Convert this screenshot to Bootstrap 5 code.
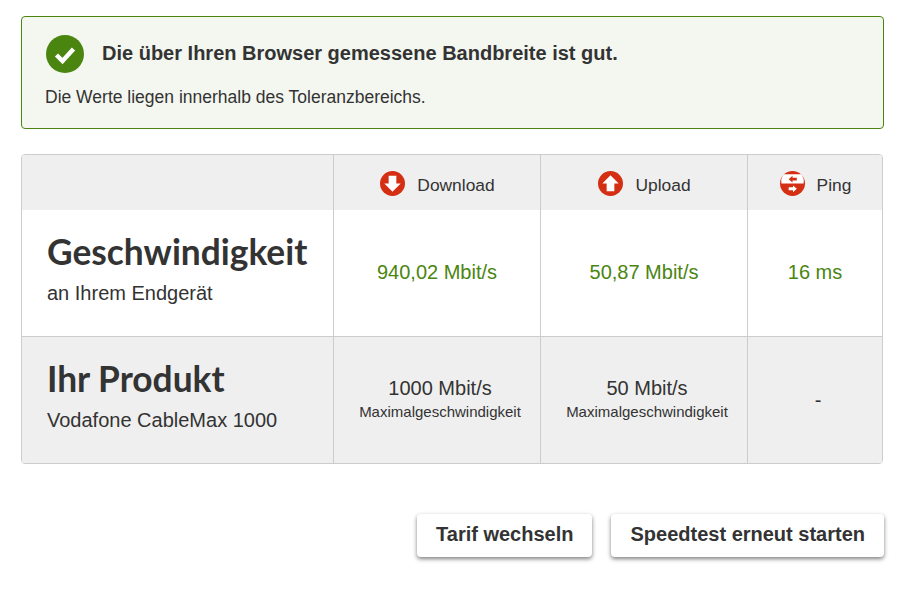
<!DOCTYPE html>
<html lang="de">
<head>
    <meta charset="UTF-8">
    <meta name="viewport" content="width=device-width, initial-scale=1.0">
    <title>Speedtest Ergebnis</title>
    <link href="https://cdn.jsdelivr.net/npm/bootstrap@5.3.0/dist/css/bootstrap.min.css" rel="stylesheet">
    <style>
        body {
            font-family: "Liberation Sans", Arial, sans-serif;
            color: #333;
            background: #fff;
        }

        .page-wrap {
            padding: 16px 24px 49px 21px;
        }

        .result-box {
            height: 113px;
            padding: 18px 23px 0;
            background: #f4f7f0;
            border: 1px solid #4a8510;
            border-radius: 4px;
            margin-bottom: 25px;
        }

        .result-head {
            font-size: 20px;
            font-weight: 700;
            line-height: 36px;
            gap: 18px;
            margin-bottom: 13px;
            padding-left: 1px;
        }

        .result-head span {
            margin-bottom: 2px;
        }

        .result-box p {
            font-size: 17.5px;
            line-height: 22px;
            margin: 0;
        }

        .speed-table {
            width: 862px;
            height: 310px;
            table-layout: fixed;
            border-collapse: separate;
            border-spacing: 0;
            border: 1px solid #ccc;
            border-radius: 4px;
            overflow: hidden;
            margin: 0 0 50px;
        }

        .speed-table th,
        .speed-table td {
            text-align: center;
            vertical-align: middle;
            padding: 0;
            font-weight: 400;
            border-left: 1px solid #ccc;
        }

        .speed-table tr > :first-child {
            border-left: 0;
            text-align: left;
            padding-left: 25px;
        }

        .speed-table thead th {
            height: 55px;
            background: #efefef;
            font-size: 17.4px;
        }

        .speed-table tbody tr:first-child td {
            height: 126px;
        }

        .speed-table tbody tr:last-child td {
            background: #efefef;
            border-top: 1px solid #ccc;
        }

        .head-label {
            gap: 12px;
            height: 26px;
        }

        .head-label svg {
            margin: 1px 0 0 1px;
        }

        .head-label span {
            padding-top: 6px;
        }

        .row-title {
            font-family: Lato, sans-serif;
            font-size: 35.3px;
            font-weight: 700;
            line-height: 40px;
            margin-bottom: 8px;
            margin-top: -9px;
        }

        .row-sub {
            font-size: 20px;
            line-height: 26px;
        }

        .speed-table .measured {
            color: #4a8510;
            font-size: 20px;
            padding-bottom: 2px;
        }

        .plan-value {
            font-size: 20px;
            line-height: 24px;
            margin-top: -4px;
        }

        .plan-note {
            font-size: 15px;
            line-height: 18px;
            margin-top: 3px;
        }

        .speed-table .plan-cell {
            padding-left: 6px;
        }

        .speed-table .plan-dash {
            font-size: 20px;
            padding-left: 6px;
        }

        .action-btn {
            height: 43px;
            padding: 0 19px 3px;
            font-size: 20px;
            font-weight: 700;
            color: #333;
            background: #fff;
            border: 0;
            border-radius: 4px;
            box-shadow: 0 2px 4px rgba(0, 0, 0, .5);
        }

        .btn-row {
            gap: 19px;
        }
    </style>
</head>
<body>
    <div class="page-wrap">
        <div class="result-box">
            <div class="result-head d-flex align-items-center">
                <svg width="38" height="38" viewBox="0 0 38 38" class="flex-shrink-0">
                    <circle cx="19" cy="19" r="19" fill="#4a8510"/>
                    <path d="M10.5 20l6 6 11-12" fill="none" stroke="#fff" stroke-width="4.4"/>
                </svg>
                <span>Die über Ihren Browser gemessene Bandbreite ist gut.</span>
            </div>
            <p>Die Werte liegen innerhalb des Toleranzbereichs.</p>
        </div>

        <table class="speed-table">
            <colgroup>
                <col style="width: 311px">
                <col style="width: 207px">
                <col style="width: 207px">
                <col>
            </colgroup>
            <thead>
                <tr>
                    <th></th>
                    <th>
                        <div class="head-label d-flex justify-content-center align-items-center">
                            <svg width="25" height="25" viewBox="0 0 26 26">
                                <circle cx="13" cy="13" r="13" fill="#d42f13"/>
                                <path d="M9 5h8v8h4.500L13 21.500 4.500 13H9z" fill="#fff"/>
                            </svg>
                            <span>Download</span>
                        </div>
                    </th>
                    <th>
                        <div class="head-label d-flex justify-content-center align-items-center">
                            <svg width="25" height="25" viewBox="0 0 26 26">
                                <circle cx="13" cy="13" r="13" fill="#d42f13"/>
                                <path d="M9 21h8v-8h4.500L13 4.500 4.500 13H9z" fill="#fff"/>
                            </svg>
                            <span>Upload</span>
                        </div>
                    </th>
                    <th>
                        <div class="head-label d-flex justify-content-center align-items-center">
                            <svg width="25" height="25" viewBox="0 0 26 26">
                                <circle cx="13" cy="13" r="13" fill="#d42f13"/>
                                <path d="M4 3.500h18a11.500 11.500 0 0 1 2.500 9.500H1.500A11.500 11.500 0 0 1 4 3.500z" fill="#fff"/>
                                <path d="M9 8.500l4-3.500v2h4.500v3H13v2z" fill="#d42f13"/>
                                <path d="M17.500 18.500l-4-3.500v2H9v3h4.500v2z" fill="#fff"/>
                            </svg>
                            <span>Ping</span>
                        </div>
                    </th>
                </tr>
            </thead>
            <tbody>
                <tr>
                    <td>
                        <div class="row-title">Geschwindigkeit</div>
                        <div class="row-sub">an Ihrem Endgerät</div>
                    </td>
                    <td class="measured">940,02 Mbit/s</td>
                    <td class="measured">50,87 Mbit/s</td>
                    <td class="measured">16 ms</td>
                </tr>
                <tr>
                    <td>
                        <div class="row-title">Ihr Produkt</div>
                        <div class="row-sub">Vodafone CableMax 1000</div>
                    </td>
                    <td class="plan-cell">
                        <div class="plan-value">1000 Mbit/s</div>
                        <div class="plan-note">Maximalgeschwindigkeit</div>
                    </td>
                    <td class="plan-cell">
                        <div class="plan-value">50 Mbit/s</div>
                        <div class="plan-note">Maximalgeschwindigkeit</div>
                    </td>
                    <td class="plan-dash">-</td>
                </tr>
            </tbody>
        </table>

        <div class="btn-row d-flex justify-content-end">
            <button type="button" class="btn action-btn">Tarif wechseln</button>
            <button type="button" class="btn action-btn">Speedtest erneut starten</button>
        </div>
    </div>
    <script src="https://cdn.jsdelivr.net/npm/bootstrap@5.3.0/dist/js/bootstrap.bundle.min.js"></script>
</body>
</html>
